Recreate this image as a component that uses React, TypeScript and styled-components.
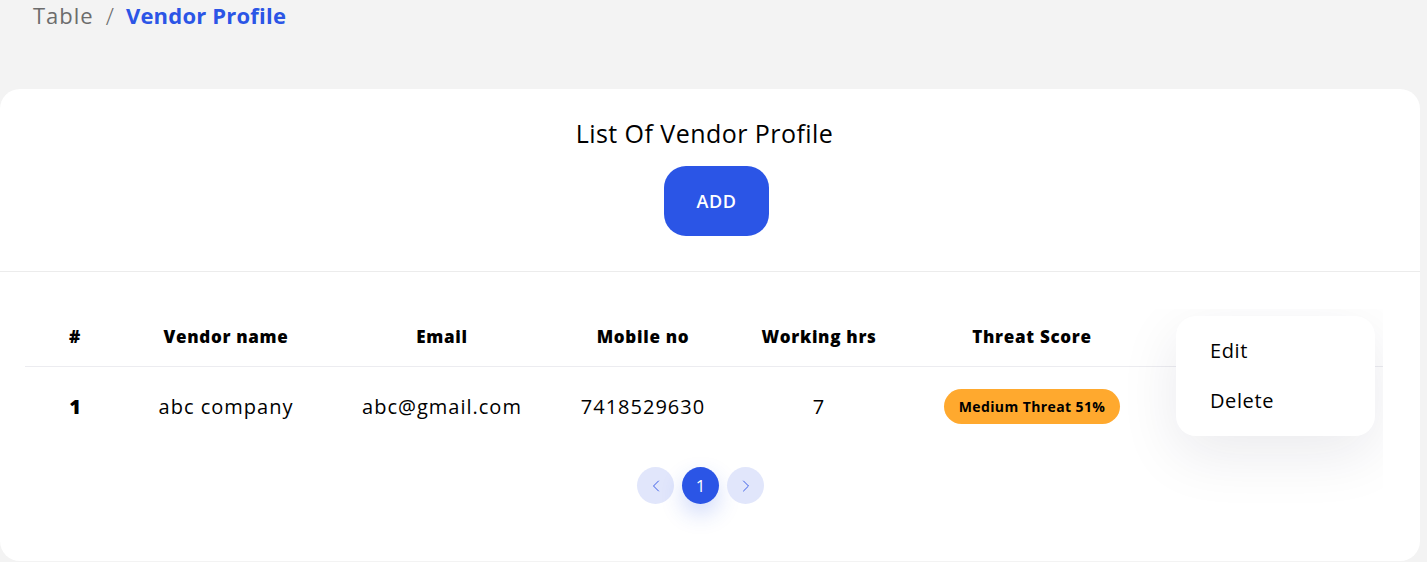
import React from "react";
import styled, { createGlobalStyle } from "styled-components";
import { ChevronLeft, ChevronRight } from "lucide-react";

const FONT = `"Open Sans", "Noto Sans", sans-serif`;
const BLUE = "#2b55e6";

const GlobalStyle = createGlobalStyle`
  html, body { margin: 0; padding: 0; }
  body { background: #f3f3f3; font-family: ${FONT}; color: #000; overflow: hidden; }
`;

const Page = styled.div`
  width: 1427px;
  height: 562px;
  display: flex;
  flex-direction: column;
`;

const Breadcrumb = styled.nav`
  height: 30px;
  padding-left: 33px;
  display: flex;
  align-items: center;
  gap: 12px;
  font-size: 22px;
`;

const Crumb = styled.span<{ $active?: boolean }>`
  color: ${(p) => (p.$active ? BLUE : "#6c6c6c")};
  font-weight: ${(p) => (p.$active ? 700 : 400)};
  letter-spacing: ${(p) => (p.$active ? "0.2px" : "1px")};
`;

const Sep = styled.span`
  color: #6c6c6c;
  font-weight: 300;
  font-size: 24px;
`;

const Card = styled.section`
  margin-top: 59px;
  width: 1420px;
  height: 472px;
  background: #fff;
  border-radius: 20px;
  display: flex;
  flex-direction: column;
`;

const CardHeader = styled.header`
  height: 183px;
  box-sizing: border-box;
  padding-top: 26px;
  border-bottom: 1px solid #ececec;
  display: flex;
  flex-direction: column;
  align-items: center;
  gap: 15px;
`;

const Title = styled.h2`
  margin: 0 11px 0 0;
  font-size: 25px;
  line-height: 36px;
  font-weight: 500;
  letter-spacing: 0.45px;
`;

const AddButton = styled.button`
  margin-left: 13px;
  width: 105px;
  height: 70px;
  border: none;
  border-radius: 22px;
  background: ${BLUE};
  color: #fff;
  font-family: ${FONT};
  font-size: 18px;
  font-weight: 600;
  letter-spacing: 0.5px;
`;

const TableWrap = styled.div`
  margin: 37px 0 0 25px;
  width: 1358px;
  height: 240px;
  position: relative;
  overflow: hidden;
  display: flex;
  flex-direction: column;
  align-items: stretch;
`;

const COLS = "100px 202px 230px 172px 180px 246px 228px";

const Row = styled.div<{ $head?: boolean }>`
  display: grid;
  grid-template-columns: ${COLS};
  align-items: center;
  box-sizing: border-box;
  height: ${(p) => (p.$head ? "58px" : "82px")};
  padding-bottom: ${(p) => (p.$head ? "3px" : "4px")};
  border-bottom: ${(p) => (p.$head ? "1px solid #ececf0" : "none")};
`;

const Th = styled.div`
  text-align: center;
  font-size: 17px;
  font-weight: 800;
  letter-spacing: 0.7px;
`;

const Td = styled.div<{ $bold?: boolean }>`
  text-align: center;
  font-size: 20px;
  letter-spacing: ${(p) => (p.$bold ? "0" : "1px")};
  font-weight: ${(p) => (p.$bold ? 800 : 400)};
  display: flex;
  justify-content: center;
`;

const Badge = styled.span`
  width: 176px;
  height: 35px;
  border-radius: 18px;
  background: #ffa92e;
  font-size: 14px;
  font-weight: 700;
  letter-spacing: 0.4px;
  display: flex;
  align-items: center;
  justify-content: center;
`;

const Menu = styled.div`
  position: absolute;
  top: 7px;
  right: 8px;
  width: 199px;
  height: 120px;
  box-sizing: border-box;
  padding: 9px 34px 11px;
  background: #fff;
  border-radius: 20px;
  box-shadow: 0 18px 60px rgba(20, 20, 50, 0.09);
  display: flex;
  flex-direction: column;
  letter-spacing: 0.6px;
`;

const MenuItem = styled.div`
  height: 50px;
  display: flex;
  align-items: center;
  font-size: 20px;
`;

const Pager = styled.div`
  margin-top: 18px;
  padding-right: 7px;
  display: flex;
  justify-content: center;
  gap: 8px;
`;

const PageBtn = styled.div<{ $active?: boolean }>`
  width: 37px;
  height: 37px;
  border-radius: 50%;
  display: flex;
  align-items: center;
  justify-content: center;
  background: ${(p) => (p.$active ? BLUE : "#e1e6fb")};
  color: ${(p) => (p.$active ? "#fff" : "#3d5fe8")};
  font-size: 17px;
  font-weight: 500;
  box-shadow: ${(p) => (p.$active ? "0 10px 22px rgba(43, 85, 230, 0.22)" : "none")};
`;

export default function App() {
  return (
    <Page>
      <GlobalStyle />
      <Breadcrumb>
        <Crumb>Table</Crumb>
        <Sep>/</Sep>
        <Crumb $active>Vendor Profile</Crumb>
      </Breadcrumb>
      <Card>
        <CardHeader>
          <Title>List Of Vendor Profile</Title>
          <AddButton>ADD</AddButton>
        </CardHeader>
        <TableWrap>
          <Row $head>
            <Th>#</Th>
            <Th>Vendor name</Th>
            <Th>Email</Th>
            <Th>Mobile no</Th>
            <Th>Working hrs</Th>
            <Th>Threat Score</Th>
            <Th></Th>
          </Row>
          <Row>
            <Td $bold>1</Td>
            <Td>abc company</Td>
            <Td>abc@gmail.com</Td>
            <Td>7418529630</Td>
            <Td>7</Td>
            <Td>
              <Badge>Medium Threat 51%</Badge>
            </Td>
            <Td></Td>
          </Row>
          <Pager>
            <PageBtn>
              <ChevronLeft size={20} strokeWidth={1.2} />
            </PageBtn>
            <PageBtn $active>1</PageBtn>
            <PageBtn>
              <ChevronRight size={20} strokeWidth={1.2} />
            </PageBtn>
          </Pager>
          <Menu>
            <MenuItem>Edit</MenuItem>
            <MenuItem>Delete</MenuItem>
          </Menu>
        </TableWrap>
      </Card>
    </Page>
  );
}
